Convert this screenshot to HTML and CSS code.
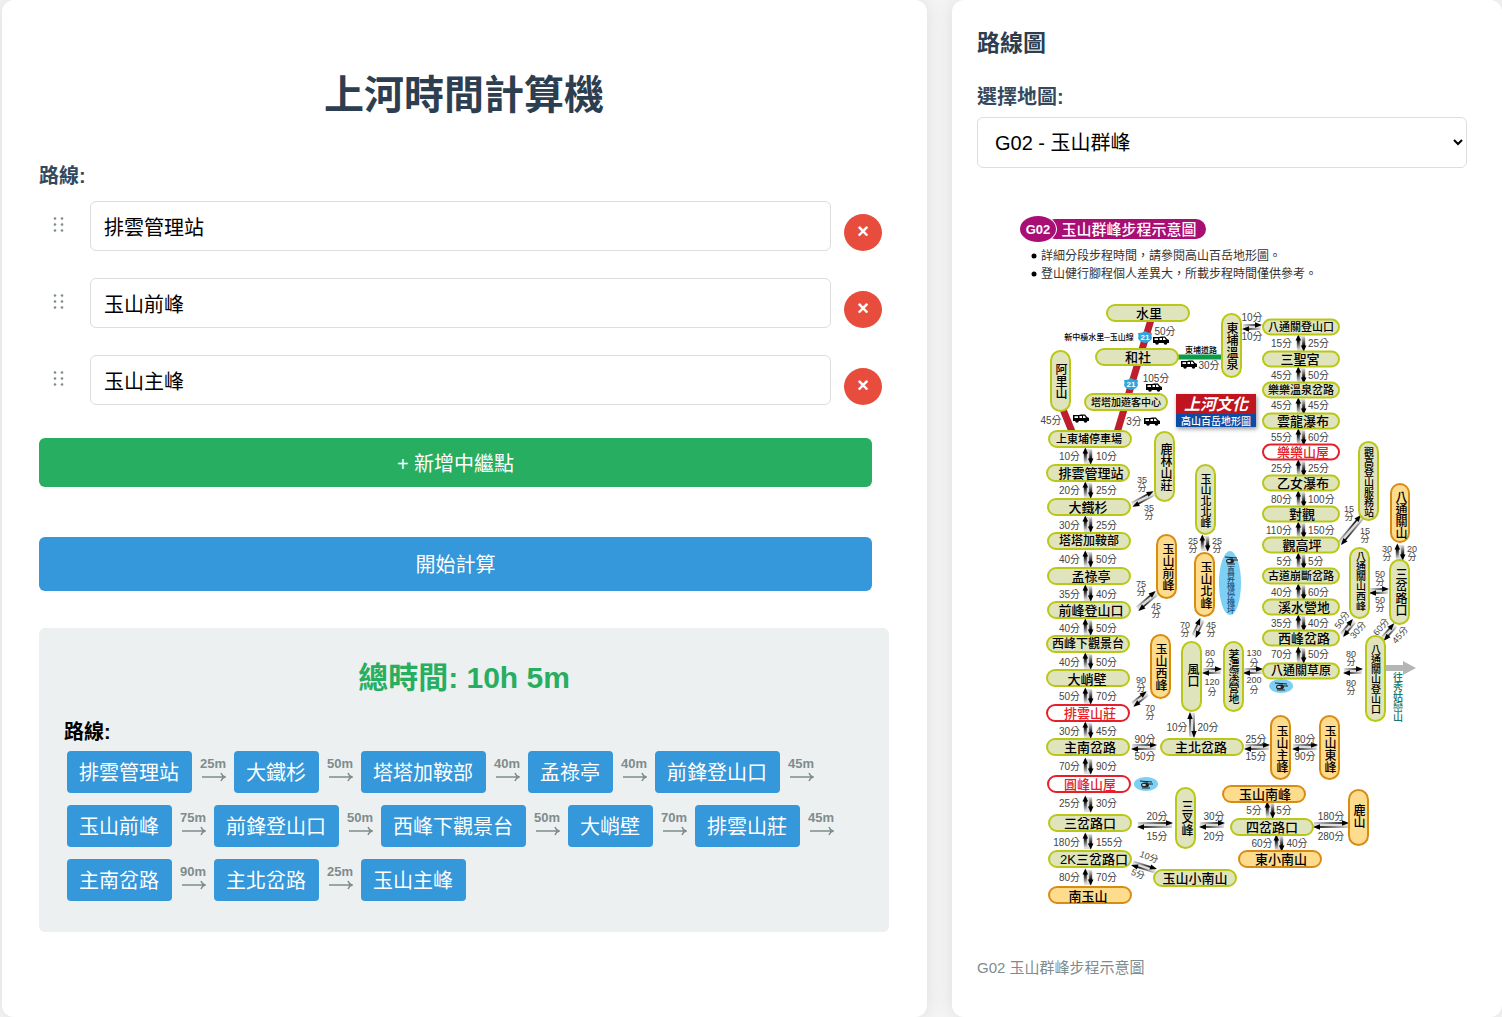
FILE: index.html
```html
<!DOCTYPE html>
<html lang="zh-Hant">
<head>
<meta charset="utf-8">
<meta name="viewport" content="width=device-width, initial-scale=1">
<title>上河時間計算機</title>
<link rel="stylesheet" href="styles.css">
</head>
<body>
<div class="layout">
  <main class="panel planner">
    <h1 class="title">上河時間計算機</h1>
    <form class="form">
      <span class="label" id="route-label">路線:</span>
      <ul class="stops" aria-labelledby="route-label">
        <li class="stop">
          <svg class="handle" viewBox="0 0 11 15" aria-hidden="true"><use href="#grip"/></svg>
          <input class="stop-input" type="text" value="排雲管理站" aria-label="起點">
          <button class="remove" type="button" aria-label="移除 排雲管理站">×</button>
        </li>
        <li class="stop">
          <svg class="handle" viewBox="0 0 11 15" aria-hidden="true"><use href="#grip"/></svg>
          <input class="stop-input" type="text" value="玉山前峰" aria-label="中繼點">
          <button class="remove" type="button" aria-label="移除 玉山前峰">×</button>
        </li>
        <li class="stop">
          <svg class="handle" viewBox="0 0 11 15" aria-hidden="true"><use href="#grip"/></svg>
          <input class="stop-input" type="text" value="玉山主峰" aria-label="終點">
          <button class="remove" type="button" aria-label="移除 玉山主峰">×</button>
        </li>
      </ul>
      <button class="btn btn-add" type="button">+ 新增中繼點</button>
      <button class="btn btn-go" type="button">開始計算</button>
    </form>
    <section class="result">
      <h2 class="total">總時間: 10h 5m</h2>
      <strong class="result-label">路線:</strong>
      <div class="route">
        <span class="chip">排雲管理站</span><span class="leg">25m<svg class="leg-arrow" viewBox="0 0 25 10" aria-hidden="true"><use href="#to"/></svg></span>
        <span class="chip">大鐵杉</span><span class="leg">50m<svg class="leg-arrow" viewBox="0 0 25 10" aria-hidden="true"><use href="#to"/></svg></span>
        <span class="chip">塔塔加鞍部</span><span class="leg">40m<svg class="leg-arrow" viewBox="0 0 25 10" aria-hidden="true"><use href="#to"/></svg></span>
        <span class="chip">孟祿亭</span><span class="leg">40m<svg class="leg-arrow" viewBox="0 0 25 10" aria-hidden="true"><use href="#to"/></svg></span>
        <span class="chip">前鋒登山口</span><span class="leg">45m<svg class="leg-arrow" viewBox="0 0 25 10" aria-hidden="true"><use href="#to"/></svg></span>
        <span class="chip">玉山前峰</span><span class="leg">75m<svg class="leg-arrow" viewBox="0 0 25 10" aria-hidden="true"><use href="#to"/></svg></span>
        <span class="chip">前鋒登山口</span><span class="leg">50m<svg class="leg-arrow" viewBox="0 0 25 10" aria-hidden="true"><use href="#to"/></svg></span>
        <span class="chip">西峰下觀景台</span><span class="leg">50m<svg class="leg-arrow" viewBox="0 0 25 10" aria-hidden="true"><use href="#to"/></svg></span>
        <span class="chip">大峭壁</span><span class="leg">70m<svg class="leg-arrow" viewBox="0 0 25 10" aria-hidden="true"><use href="#to"/></svg></span>
        <span class="chip">排雲山莊</span><span class="leg">45m<svg class="leg-arrow" viewBox="0 0 25 10" aria-hidden="true"><use href="#to"/></svg></span>
        <span class="chip">主南岔路</span><span class="leg">90m<svg class="leg-arrow" viewBox="0 0 25 10" aria-hidden="true"><use href="#to"/></svg></span>
        <span class="chip">主北岔路</span><span class="leg">25m<svg class="leg-arrow" viewBox="0 0 25 10" aria-hidden="true"><use href="#to"/></svg></span>
        <span class="chip">玉山主峰</span>
      </div>
    </section>
  </main>

  <aside class="panel maps">
    <h2 class="maps-title">路線圖</h2>
    <label class="label maps-label" for="map-select">選擇地圖:</label>
    <select class="map-select" id="map-select"><option>G02 - 玉山群峰</option></select>
    <figure class="figure">
      <svg class="map" viewBox="977 188 490 754" role="img" aria-label="G02 玉山群峰步程示意圖">
        <defs>
          <g id="grip"><circle cx="2" cy="1.5" r="1.3"/><circle cx="9" cy="1.5" r="1.3"/><circle cx="2" cy="7.5" r="1.3"/><circle cx="9" cy="7.5" r="1.3"/><circle cx="2" cy="13.5" r="1.3"/><circle cx="9" cy="13.5" r="1.3"/></g>
          <path id="to" d="M1 5H24M20 1Q21 4 24 5 21 6 20 9" fill="none" stroke="#7f8c8d" stroke-width="1.5"/>
          <linearGradient id="fade-up" x1="0" y1="0" x2="0" y2="1"><stop offset="0" stop-color="#000"/><stop offset="1" stop-color="#ccc"/></linearGradient>
          <linearGradient id="fade-down" x1="0" y1="1" x2="0" y2="0"><stop offset="0" stop-color="#000"/><stop offset="1" stop-color="#ccc"/></linearGradient>
          <linearGradient id="fade-right" x1="1" y1="0" x2="0" y2="0"><stop offset="0" stop-color="#000"/><stop offset="1" stop-color="#ccc"/></linearGradient>
          <linearGradient id="fade-left" x1="0" y1="0" x2="1" y2="0"><stop offset="0" stop-color="#000"/><stop offset="1" stop-color="#ccc"/></linearGradient>
          <g id="av">
            <rect x="-4" y="-7" width="8" height="15" fill="#ddd"/>
            <rect x="-4.200" y="-3" width="3" height="9" fill="url(#fade-up)"/><path d="M-2.700-8.500 0.100-2.500H-5.500z"/>
            <rect x="1.200" y="-6" width="3" height="9" fill="url(#fade-down)"/><path d="M2.700 8.500-.1 2.500H5.500z"/>
          </g>
          <g id="a20">
            <rect x="-9" y="-3" width="18" height="6" fill="#ddd"/>
            <rect x="-8" y="-2.800" width="14" height="1.600" fill="url(#fade-right)"/><path d="M10-2 3-4.700V.7z"/>
            <rect x="-6" y="1.200" width="14" height="1.600" fill="url(#fade-left)"/><path d="M-10 2-3-.7V4.700z"/>
          </g>
          <g id="a26">
            <rect x="-12" y="-3" width="24" height="6" fill="#ddd"/>
            <rect x="-11" y="-2.800" width="20" height="1.600" fill="url(#fade-right)"/><path d="M13-2 6-4.700V.7z"/>
            <rect x="-9" y="1.200" width="20" height="1.600" fill="url(#fade-left)"/><path d="M-13 2-6-.7V4.700z"/>
          </g>
          <g id="a36">
            <rect x="-17" y="-3" width="34" height="6" fill="#ddd"/>
            <rect x="-17" y="-2.800" width="30" height="1.600" fill="url(#fade-right)"/><path d="M18-2 11-4.700V.7z"/>
            <rect x="-13" y="1.200" width="30" height="1.600" fill="url(#fade-left)"/><path d="M-18 2-11-.7V4.700z"/>
          </g>
          <rect id="pill" x="-41" y="-8" width="82" height="16" rx="8"/>
          <rect id="pill-s" x="-38" y="-7.500" width="76" height="15" rx="7.500"/>
          <g id="car"><path d="M-8-3H-2L0-3.500H4L6-1 8 0V3H-8z"/><path d="M-6.500-1.800H-3V0H-6.500zM-1.500-2H1V0H-1.500zM2-2.300H3.500L5 0H2z" fill="#fff"/><circle cx="-4" cy="3" r="1.800"/><circle cx="4.500" cy="3" r="1.800"/></g>
          <path id="shield" d="M-7-4Q-3-3.500 0-6 3-3.500 7-4 6-1 7 1 6 5 0 6-6 5-7 1-6-1-7-4z" fill="#2ca6dd"/>
          <g id="heli"><path d="M-6-3 6-2M1-2.500V0M0 0H7M-4 4H4" stroke="#222" fill="none"/><ellipse cx="-1" cy="1" rx="4" ry="2.500" fill="#222"/><ellipse cx="-2" cy="1" rx="2" ry="1" fill="#cde"/></g>
        </defs>

        <!-- Heading and notes -->
        <g class="brand">
          <rect x="1045" y="219" width="161" height="20" rx="10"/>
          <ellipse cx="1038" cy="229" rx="19" ry="14" fill="#fff"/>
          <ellipse cx="1038" cy="229" rx="18" ry="13"/>
        </g>
        <text class="t13 bold white" x="1038" y="229">G02</text>
        <text class="t15 white" x="1129" y="229">玉山群峰步程示意圖</text>
        <circle cx="1034" cy="256" r="2.500"/><circle cx="1034" cy="274" r="2.500"/>
        <text class="t12 note start" x="1041" y="256">詳細分段步程時間，請參閱高山百岳地形圖。</text>
        <text class="t12 note start" x="1041" y="274">登山健行腳程個人差異大，所載步程時間僅供參考。</text>

        <!-- Roads -->
        <g class="road"><path d="M1153 313 1116 436M1060 402 1075 439"/></g>
        <path d="M1178 357H1223" stroke="#0b9b4a" stroke-width="5"/>
        <use href="#shield" x="1145" y="337"/><use href="#shield" x="1131" y="384"/>
        <text class="t8 bold white" x="1145" y="337">21</text><text class="t8 bold white" x="1131" y="384">21</text>
        <use href="#car" x="1161" y="340"/><use href="#car" x="1189" y="364"/><use href="#car" x="1154" y="387"/><use href="#car" x="1081" y="418"/><use href="#car" x="1152" y="421"/>
        <text class="t8" x="1099" y="337">新中橫水里─玉山線</text><text class="t8" x="1201" y="350">東埔道路</text>

        <!-- Publisher mark -->
        <rect class="mark-shadow" x="1176" y="394" width="80" height="33" fill="#0c4ca3"/>
        <rect x="1176" y="394" width="80" height="20" fill="#c0151f"/>
        <text class="t16 bold white slant" x="1216" y="404">上河文化</text>
        <text class="t10 white" x="1216" y="421">高山百岳地形圖</text>

        <!-- Walking arrows -->
        <use href="#av" x="1088" y="456"/><use href="#av" x="1088" y="490"/><use href="#av" x="1088" y="524"/><use href="#av" x="1088" y="559"/><use href="#av" x="1088" y="593"/><use href="#av" x="1088" y="627"/><use href="#av" x="1088" y="661"/><use href="#av" x="1088" y="696"/><use href="#av" x="1088" y="730"/><use href="#av" x="1088" y="766"/><use href="#av" x="1088" y="804"/><use href="#av" x="1088" y="841"/><use href="#av" x="1088" y="877"/>
        <use href="#av" x="1301" y="343"/><use href="#av" x="1301" y="375"/><use href="#av" x="1301" y="406"/><use href="#av" x="1301" y="437"/><use href="#av" x="1301" y="468"/><use href="#av" x="1301" y="499"/><use href="#av" x="1301" y="530"/><use href="#av" x="1301" y="561"/><use href="#av" x="1301" y="592"/><use href="#av" x="1301" y="623"/><use href="#av" x="1301" y="655"/>
        <use href="#av" x="1205" y="543"/><use href="#a26" transform="translate(1192 725) rotate(-90)"/><use href="#av" x="1270" y="810"/><use href="#av" x="1279" y="843"/><use href="#av" x="1400" y="552"/>
        <use href="#a20" x="1252" y="327"/><use href="#a20" x="1212" y="671"/><use href="#a20" x="1253" y="671"/><use href="#a20" x="1353" y="671"/><use href="#a26" x="1144" y="747"/><use href="#a26" x="1257" y="747"/><use href="#a26" x="1305" y="747"/><use href="#a36" x="1155" y="825"/><use href="#a26" x="1212" y="825"/><use href="#a36" x="1331" y="825"/><use href="#a20" x="1379" y="591"/>
        <use href="#a26" transform="translate(1143 499) rotate(-28)"/><use href="#a26" transform="translate(1147 601) rotate(-40)"/><use href="#a20" transform="translate(1140 699) rotate(-38)"/><use href="#a20" transform="translate(1198 628) rotate(-65)"/><use href="#a36" transform="translate(1351 530) rotate(-50)"/><use href="#a20" transform="translate(1348 628) rotate(-50)"/><use href="#a20" transform="translate(1389 632) rotate(-48)"/><use href="#a26" transform="translate(1144 867) rotate(18)"/>
        <path d="M1385 665H1403V661L1416 668 1403 675V671H1385z" fill="#b5b5b5"/>

        <!-- Helipads -->
        <g fill="#7dcff3"><ellipse cx="1230" cy="583" rx="11" ry="32"/><ellipse cx="1281" cy="686" rx="12" ry="7"/><ellipse cx="1146" cy="784" rx="12" ry="7"/></g>
        <use href="#heli" x="1231" y="560"/><use href="#heli" x="1281" y="686"/><use href="#heli" x="1146" y="784"/>
        <text class="t8 v navy" x="1230" y="590">直昇機停機坪</text>

        <!-- Trail points -->
        <g class="green">
          <use href="#pill" x="1148" y="313"/><use href="#pill" x="1137" y="357"/><use href="#pill" x="1126" y="402"/><use href="#pill" x="1090" y="439"/><use href="#pill" x="1088" y="473"/><use href="#pill" x="1089" y="507"/><use href="#pill" x="1089" y="541"/><use href="#pill" x="1089" y="576"/><use href="#pill" x="1089" y="610"/><use href="#pill" x="1088" y="644"/><use href="#pill" x="1088" y="678"/><use href="#pill" x="1088" y="747"/><use href="#pill" x="1090" y="823"/><use href="#pill" x="1090" y="859"/><use href="#pill" x="1202" y="747"/><use href="#pill" x="1195" y="878"/><use href="#pill" x="1272" y="827"/>
          <use href="#pill-s" x="1301" y="327"/><use href="#pill-s" x="1301" y="359"/><use href="#pill-s" x="1301" y="390"/><use href="#pill-s" x="1301" y="421"/><use href="#pill-s" x="1301" y="483"/><use href="#pill-s" x="1301" y="514"/><use href="#pill-s" x="1301" y="545"/><use href="#pill-s" x="1301" y="576"/><use href="#pill-s" x="1301" y="607"/><use href="#pill-s" x="1301" y="638"/><use href="#pill-s" x="1301" y="671"/>
          <rect x="1051" y="351" width="19" height="60" rx="9.500"/><rect x="1222" y="314" width="19" height="63" rx="9.500"/><rect x="1155" y="432" width="19" height="69" rx="9.500"/><rect x="1196" y="465" width="19" height="69" rx="9.500"/><rect x="1182" y="642" width="19" height="69" rx="9.500"/><rect x="1224" y="642" width="19" height="69" rx="9.500"/><rect x="1359" y="442" width="19" height="78" rx="9.500"/><rect x="1350" y="548" width="19" height="70" rx="9.500"/><rect x="1390" y="560" width="19" height="64" rx="9.500"/><rect x="1366" y="636" width="19" height="85" rx="9.500"/><rect x="1176" y="788" width="19" height="60" rx="9.500"/>
        </g>
        <g class="orange">
          <use href="#pill" x="1090" y="895"/><use href="#pill" x="1264" y="794"/><use href="#pill" x="1280" y="859"/>
          <rect x="1157" y="535" width="19" height="63" rx="9.500"/><rect x="1195" y="553" width="19" height="63" rx="9.500"/><rect x="1151" y="635" width="19" height="63" rx="9.500"/><rect x="1391" y="484" width="18" height="58" rx="9"/><rect x="1271" y="716" width="19" height="63" rx="9.500"/><rect x="1320" y="716" width="19" height="63" rx="9.500"/><rect x="1349" y="790" width="19" height="55" rx="9.500"/>
        </g>
        <g class="hut"><use href="#pill" x="1088" y="713"/><use href="#pill" x="1089" y="784"/><use href="#pill-s" x="1301" y="452"/></g>

        <g class="t13">
          <text x="1149" y="313">水里</text><text x="1138" y="357">和社</text><text x="1091" y="473">排雲管理站</text><text x="1088" y="507">大鐵杉</text><text x="1091" y="576">孟祿亭</text><text x="1091" y="610">前峰登山口</text><text x="1087" y="679">大峭壁</text><text x="1090" y="747">主南岔路</text><text x="1090" y="823">三岔路口</text><text x="1094" y="859">2K三岔路口</text><text x="1088" y="896">南玉山</text><text x="1201" y="747">主北岔路</text><text x="1195" y="878">玉山小南山</text><text x="1265" y="794">玉山南峰</text><text x="1272" y="827">四岔路口</text><text x="1281" y="859">東小南山</text>
          <text x="1300" y="359">三聖宮</text><text x="1303" y="421">雲龍瀑布</text><text x="1303" y="483">乙女瀑布</text><text x="1302" y="514">對觀</text><text x="1302" y="545">觀高坪</text><text x="1304" y="607">溪水營地</text><text x="1304" y="638">西峰岔路</text>
          <g class="red"><text x="1090" y="713">排雲山莊</text><text x="1090" y="784">圓峰山屋</text><text x="1303" y="452">樂樂山屋</text></g>
        </g>
        <g class="t12">
          <text x="1089" y="541">塔塔加鞍部</text><text x="1088" y="644">西峰下觀景台</text><text x="1301" y="671">八通關草原</text>
          <g class="v"><text x="1167" y="567">玉山前峰</text><text x="1205" y="585">玉山北峰</text><text x="1160" y="667">玉山西峰</text><text x="1192" y="675">風口</text><text x="1281" y="749">玉山主峰</text><text x="1329" y="749">玉山東峰</text><text x="1186" y="818">三叉峰</text><text x="1358" y="816">鹿山</text><text x="1060" y="381">阿里山</text><text x="1231" y="346">東埔溫泉</text><text x="1165" y="467">鹿林山莊</text><text x="1400" y="515">八通關山</text><text x="1400" y="592">三岔路口</text></g>
        </g>
        <g class="t11">
          <text x="1089" y="439">上東埔停車場</text><text x="1301" y="327">八通關登山口</text><text x="1301" y="390">樂樂溫泉岔路</text><text x="1301" y="576">古道崩斷岔路</text>
          <g class="v"><text x="1205" y="501">玉山北北峰</text><text x="1233" y="677">荖濃溪營地</text></g>
        </g>
        <g class="t10">
          <text x="1126" y="402">塔塔加遊客中心</text>
          <g class="v"><text x="1368" y="482">觀高登山服務站</text><text x="1360" y="581">八通關山西峰</text><text x="1375" y="679">八通關山登山口</text><text class="teal" x="1397" y="697">往秀姑巒山</text></g>
        </g>

        <!-- Walking times -->
        <g class="time">
          <g class="end">
            <text x="1080" y="456">10分</text><text x="1080" y="490">20分</text><text x="1080" y="525">30分</text><text x="1080" y="559">40分</text><text x="1080" y="594">35分</text><text x="1080" y="628">40分</text><text x="1080" y="662">40分</text><text x="1080" y="696">50分</text><text x="1080" y="731">30分</text><text x="1080" y="766">70分</text><text x="1080" y="803">25分</text><text x="1080" y="842">180分</text><text x="1080" y="877">80分</text>
            <text x="1292" y="343">15分</text><text x="1292" y="375">45分</text><text x="1292" y="405">45分</text><text x="1292" y="437">55分</text><text x="1292" y="468">25分</text><text x="1292" y="499">80分</text><text x="1292" y="530">110分</text><text x="1292" y="561">5分</text><text x="1292" y="592">40分</text><text x="1292" y="623">35分</text><text x="1292" y="654">70分</text>
          </g>
          <g class="start">
            <text x="1096" y="456">10分</text><text x="1096" y="490">25分</text><text x="1096" y="525">25分</text><text x="1096" y="559">50分</text><text x="1096" y="594">40分</text><text x="1096" y="628">50分</text><text x="1096" y="662">50分</text><text x="1096" y="696">70分</text><text x="1096" y="731">45分</text><text x="1096" y="766">90分</text><text x="1096" y="803">30分</text><text x="1096" y="842">155分</text><text x="1096" y="877">70分</text>
            <text x="1308" y="343">25分</text><text x="1308" y="375">50分</text><text x="1308" y="405">45分</text><text x="1308" y="437">60分</text><text x="1308" y="468">25分</text><text x="1308" y="499">100分</text><text x="1308" y="530">150分</text><text x="1308" y="561">5分</text><text x="1308" y="592">60分</text><text x="1308" y="623">40分</text><text x="1308" y="654">50分</text>
          </g>
          <text x="1165" y="331">50分</text><text x="1209" y="365">30分</text><text x="1156" y="378">105分</text><text x="1051" y="420">45分</text><text x="1134" y="421">3分</text><text x="1252" y="317">10分</text><text x="1252" y="336">10分</text>
          <text x="1145" y="739">90分</text><text x="1145" y="756">50分</text><text x="1256" y="739">25分</text><text x="1256" y="756">15分</text><text x="1305" y="739">80分</text><text x="1305" y="756">90分</text><text x="1157" y="816">20分</text><text x="1157" y="836">15分</text><text x="1214" y="816">30分</text><text x="1214" y="836">20分</text><text x="1331" y="816">180分</text><text x="1331" y="836">280分</text><text x="1177" y="727">10分</text><text x="1208" y="727">20分</text><text x="1254" y="810">5分</text><text x="1284" y="810">5分</text><text x="1262" y="843">60分</text><text x="1297" y="843">40分</text>
        </g>
        <g class="time t9">
          <text x="1142" y="480">35<tspan x="1142" dy="8">分</tspan></text><text x="1149" y="508">35<tspan x="1149" dy="8">分</tspan></text><text x="1193" y="541">25<tspan x="1193" dy="8">分</tspan></text><text x="1217" y="541">25<tspan x="1217" dy="8">分</tspan></text><text x="1141" y="584">75<tspan x="1141" dy="8">分</tspan></text><text x="1156" y="606">45<tspan x="1156" dy="8">分</tspan></text><text x="1185" y="625">70<tspan x="1185" dy="8">分</tspan></text><text x="1211" y="625">45<tspan x="1211" dy="8">分</tspan></text><text x="1141" y="680">90<tspan x="1141" dy="8">分</tspan></text><text x="1150" y="708">70<tspan x="1150" dy="8">分</tspan></text>
          <text x="1210" y="653">80<tspan x="1210" dy="10">分</tspan></text><text x="1212" y="682">120<tspan x="1212" dy="10">分</tspan></text><text x="1254" y="653">130<tspan x="1254" dy="10">分</tspan></text><text x="1254" y="680">200<tspan x="1254" dy="10">分</tspan></text>
          <text x="1349" y="509">15<tspan x="1349" dy="8">分</tspan></text><text x="1365" y="531">15<tspan x="1365" dy="8">分</tspan></text><text x="1387" y="549">30<tspan x="1387" dy="8">分</tspan></text><text x="1412" y="549">20<tspan x="1412" dy="8">分</tspan></text><text x="1380" y="574">50<tspan x="1380" dy="8">分</tspan></text><text x="1380" y="600">50<tspan x="1380" dy="8">分</tspan></text><text x="1351" y="654">80<tspan x="1351" dy="8">分</tspan></text><text x="1351" y="683">80<tspan x="1351" dy="8">分</tspan></text>
          <text transform="translate(1342 620) rotate(-55)">50分</text><text transform="translate(1358 630) rotate(-50)">30分</text><text transform="translate(1381 627) rotate(-50)">60分</text><text transform="translate(1400 635) rotate(-50)">45分</text><text transform="translate(1149 857) rotate(20)">10分</text><text transform="translate(1138 874) rotate(20)">5分</text>
        </g>
      </svg>
      <figcaption class="caption">G02 玉山群峰步程示意圖</figcaption>
    </figure>
  </aside>
</div>
</body>
</html>
```

FILE: styles.css
```css
* {
  box-sizing: border-box;
}

body {
  margin: 0;
  background: #f5f5f5;
  color: #000;
  font: 20px/30px "Liberation Sans", "Noto Sans CJK TC", sans-serif;
}

button,
input,
select {
  font: inherit;
}

.layout {
  display: grid;
  grid-template-columns: minmax(0, 925fr) minmax(0, 550fr);
  gap: 25px;
  min-height: 100vh;
  padding-left: 2px;
}

.panel {
  background: #fff;
  border-radius: 12px;
  box-shadow: 0 0 20px rgba(0, 0, 0, 0.1);
}

/* Planner */

.planner {
  padding: 65px 38px 37px 37px;
}

.title {
  margin: 0 0 36px;
  color: #2c3e50;
  font-size: 40px;
  line-height: 60px;
  text-align: center;
}

.form {
  display: flex;
  flex-direction: column;
}

.label {
  color: #34495e;
  font-weight: bold;
}

.stops {
  display: flex;
  flex-direction: column;
  gap: 27px;
  margin: 10px 0 33px;
  padding: 0 7px 0 0;
  list-style: none;
}

.stop {
  display: flex;
  align-items: flex-start;
  height: 50px;
}

.handle {
  flex: none;
  width: 11px;
  height: 15px;
  margin: 16px 26px 0 14px;
  fill: #7f8c8d;
  cursor: grab;
}

.stop-input {
  flex: 1;
  min-width: 0;
  height: 50px;
  padding: 0 13px;
  border: 1px solid #ddd;
  border-radius: 6px;
}

.remove {
  flex: none;
  width: 38px;
  height: 37px;
  margin: 13px 0 0 13px;
  padding: 0 0 4px;
  border: 0;
  border-radius: 50%;
  background: #e74c3c;
  color: #fff;
  font-weight: bold;
  line-height: 30px;
}

.btn {
  margin-right: 17px;
  padding: 2px 0 0;
  border: 0;
  border-radius: 6px;
  color: #fff;
}

.btn-add {
  height: 49px;
  margin-bottom: 50px;
  background: #27ae60;
}

.btn-go {
  height: 54px;
  background: #3498db;
}

.result {
  margin-top: 37px;
  padding: 26px 25px 31px;
  border-radius: 6px;
  background: #ecf0f1;
}

.total {
  margin: 0 0 15px;
  color: #27ae60;
  font-size: 30px;
  line-height: 48px;
  text-align: center;
}

.result-label {
  display: block;
}

.route {
  display: flex;
  flex-wrap: wrap;
  row-gap: 12px;
  margin-top: 4px;
  padding-left: 3px;
}

.chip {
  height: 42px;
  padding: 0 13px 0 12px;
  border-radius: 4px;
  background: #3498db;
  color: #fff;
  line-height: 44px;
}

.leg {
  display: flex;
  flex-direction: column;
  align-items: center;
  width: 42px;
  padding-top: 5px;
  color: #7f8c8d;
  font-size: 13px;
  font-weight: bold;
  line-height: 16px;
}

.leg-arrow {
  width: 25px;
  height: 10px;
}

/* Map panel */

.maps {
  display: flex;
  flex-direction: column;
  padding: 25px 35px 25px 25px;
}

.maps-title {
  margin: 0 0 21px;
  color: #2c3e50;
  font-size: 23px;
  line-height: 36px;
}

.maps-label {
  margin-bottom: 5px;
}

.map-select {
  width: 100%;
  height: 51px;
  padding: 0 0 0 13px;
  border: 1px solid #ddd;
  border-radius: 6px;
  background-color: #fff;
}

.figure {
  margin: 20px 0 0;
}

.map {
  display: block;
  width: 100%;
  font-family: "Liberation Sans", "Noto Sans CJK TC", sans-serif;
  font-weight: 500;
}

.caption {
  margin-top: 14px;
  color: #7f8c8d;
  font-size: 15px;
  line-height: 24px;
}

/* Map drawing */

.map text {
  dominant-baseline: central;
  text-anchor: middle;
}

.map .start text,
.map text.start {
  text-anchor: start;
}

.map .end text {
  text-anchor: end;
}

.map .v text,
.map text.v {
  writing-mode: vertical-rl;
}

.t8 { font-size: 8px; }
.time { font-size: 10px; }
.t9 { font-size: 9px; }
.t10 { font-size: 10px; }
.t11 { font-size: 11px; }
.t12 { font-size: 12px; }
.t13 { font-size: 13px; }
.t15 { font-size: 15px; }
.t16 { font-size: 16px; }

.bold { font-weight: bold; }
.slant { font-style: italic; }
.white { fill: #fff; }
.red { fill: #e5202b; }
.teal { fill: #17776a; }
.navy { fill: #1d4f78; }

.note {
  fill: #333;
  font-weight: 400;
}

.time {
  fill: #444;
  font-weight: 400;
}

.brand { fill: #a90e74; }

.road path {
  fill: none;
  stroke: #be1e2d;
  stroke-width: 7;
}

.mark-shadow {
  filter: drop-shadow(1px 2px 2px rgba(0, 0, 0, 0.4));
}

.green,
.orange,
.hut {
  stroke-width: 2;
}

.green {
  fill: #e0e4bd;
  stroke: #b9c818;
}

.orange {
  fill: #fddc8e;
  stroke: #d98c14;
}

.hut {
  fill: #fff;
  stroke: #e5202b;
}
```
